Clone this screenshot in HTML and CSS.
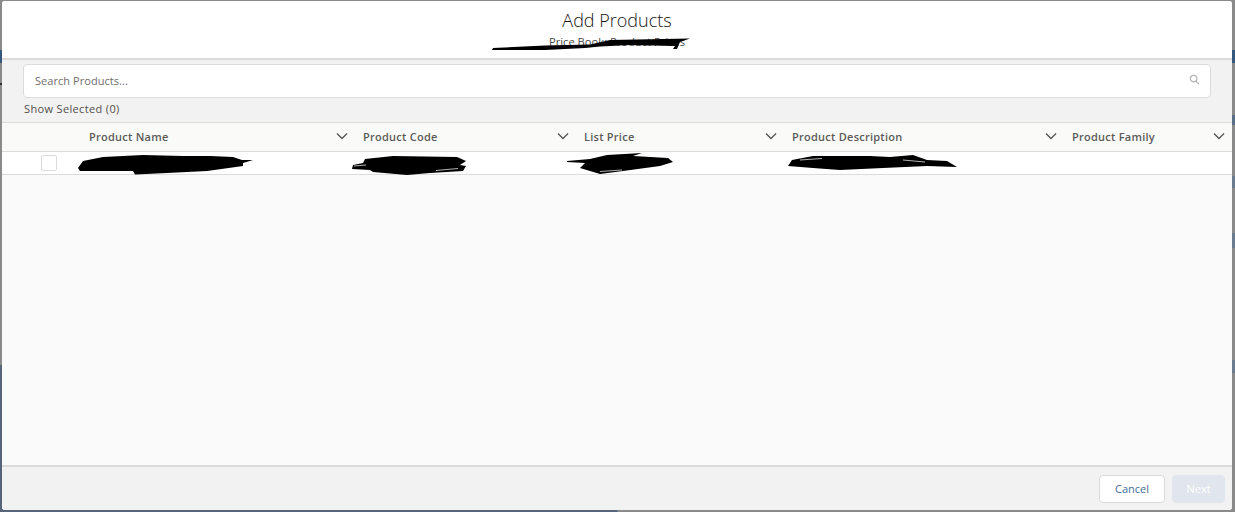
FILE: index.html
```html
<!DOCTYPE html>
<html lang="en">
<head>
<meta charset="utf-8">
<title>Add Products</title>
<link rel="stylesheet" href="styles.css">
</head>
<body>
<div class="modal">
  <header class="modal-header">
    <h1 class="title">Add Products</h1>
    <p class="subtitle">Price Book: Product Prices</p>
  </header>
  <section class="toolbar">
    <div class="search">
      <span class="search-text">Search Products...</span>
      <svg class="search-icon" viewBox="0 0 12 12" aria-hidden="true"><circle cx="5" cy="5" r="3.6"/><path d="M7.7 7.7 11 11"/></svg>
    </div>
    <div class="show-selected">Show Selected (0)</div>
  </section>
  <section class="table">
    <div class="table-row table-head">
      <div class="cell-check"></div>
      <div class="head-cell"><span>Product Name</span><svg class="chevron" viewBox="0 0 12 8" aria-hidden="true"><path d="M1 1.5 6 6.5 11 1.5"/></svg></div>
      <div class="head-cell"><span>Product Code</span><svg class="chevron" viewBox="0 0 12 8" aria-hidden="true"><path d="M1 1.5 6 6.5 11 1.5"/></svg></div>
      <div class="head-cell"><span>List Price</span><svg class="chevron" viewBox="0 0 12 8" aria-hidden="true"><path d="M1 1.5 6 6.5 11 1.5"/></svg></div>
      <div class="head-cell"><span>Product Description</span><svg class="chevron" viewBox="0 0 12 8" aria-hidden="true"><path d="M1 1.5 6 6.5 11 1.5"/></svg></div>
      <div class="head-cell"><span>Product Family</span><svg class="chevron" viewBox="0 0 12 8" aria-hidden="true"><path d="M1 1.5 6 6.5 11 1.5"/></svg></div>
    </div>
    <div class="table-row table-data">
      <div class="cell-check"><span class="checkbox"></span></div>
      <div></div><div></div><div></div><div></div><div></div>
    </div>
  </section>
  <footer class="modal-footer">
    <button class="btn btn-cancel" type="button">Cancel</button>
    <button class="btn btn-next" type="button">Next</button>
  </footer>
</div>
<svg class="redactions" viewBox="0 0 1235 512" aria-hidden="true">
  <path d="M492 50 493 48 545 45.500 590 44.500 610 40 690 38.500 680 42 677 49 673 49 675 46 630 45 600 46.500 585 48 545 50Z"/>
  <path d="M78 168 83 161 103 157 143 155 183 156 210 156 233 157 242 160 253 160 243 163 243 166 207 171 167 173 135 174.500 133 171 103 171 80 171Z"/>
  <path d="M352 169 353 165 363 163 365 159 393 156 457 157 466 161 460 165 466 166 463 171 430 173 407 175 373 172 370 170Z"/>
  <path d="M567 161 590 159 607 155 642 153 633 156 668 158 673 162 660 166 623 171 600 174 580 168 585 163 567 162Z"/>
  <path d="M788 166 792 160 813 156 870 156 890 157 913 155 927 160 947 161 957 167 927 166 883 168 840 170 813 168Z"/>
  <path class="streak" d="M436 170.500 458 168.500M354 166 366 165M800 160 822 158.500M903 160 925 162M600 171.500 622 170"/>
</svg>
</body>
</html>
```
FILE: styles.css
```css
* { box-sizing: border-box; }
html, body { height: 100%; }
body {
  margin: 0;
  height: 512px;
  overflow: hidden;
  position: relative;
  padding: 1px 3px 2px 2px;
  font-family: "Open Sans", "Noto Sans", sans-serif;
  color: #3e3e3c;
  background-color: #8a8a8a;
  background-image:
    linear-gradient(#8a8a8a 0 50px, #35587f 50px 63px, #8a8a8a 63px 83px, #2f2f2f 83px 85px, #8a8a8a 85px 365px, #56657a 365px 512px),
    linear-gradient(#8a8a8a 0 50px, #35587f 50px 63px, #8a8a8a 63px 115px, #5a6f88 115px 125px, #8a8a8a 125px 176px, #6c7c90 176px 188px, #8a8a8a 188px 233px, #6c7c90 233px 248px, #8a8a8a 248px 360px, #6c7c90 360px 373px, #8a8a8a 373px 512px);
  background-size: 50% 100%, 50% 100%;
  background-position: left top, right top;
  background-repeat: no-repeat;
}
.modal {
  height: 509px;
  display: flex;
  flex-direction: column;
  background: #fafafa;
  border-radius: 3px;
  overflow: hidden;
}
.modal-header {
  height: 59px;
  flex: none;
  background: #fff;
  border-bottom: 2px solid #dddbda;
  text-align: center;
  padding-top: 8px;
}
.title {
  margin: 0;
  font-size: 18px;
  line-height: 22px;
  font-weight: 300;
  color: #16130f;
}
.subtitle {
  margin: 4px 0 0;
  font-size: 11.200px;
  line-height: 14px;
  color: #4a4a4a;
}
.toolbar {
  height: 63px;
  flex: none;
  background: #f3f2f2;
  border-bottom: 1px solid #dddbda;
  padding: 4px 21px 0 21px;
}
.search {
  height: 34px;
  display: flex;
  align-items: center;
  justify-content: space-between;
  background: #fff;
  border: 1px solid #dddbda;
  border-radius: 4px;
  padding: 0 10px 0 11px;
}
.search-text {
  margin-top: -2px;
  font-size: 11px;
  color: #706e6b;
  letter-spacing: 0.05px;
}
.search-icon {
  width: 11px;
  height: 11px;
  margin-top: -3px;
  fill: none;
  stroke: #b0adab;
  stroke-width: 1.200;
}
.show-selected {
  margin: 4px 0 0 1px;
  font-size: 11px;
  line-height: 14px;
  color: #514f4d;
  letter-spacing: 0.35px;
}
.table-row {
  display: grid;
  grid-template-columns: 79px 274px 221px 208px 280px 1fr;
}
.table-head {
  height: 29px;
  background: #fafaf9;
  border-bottom: 1px solid #dddbda;
}
.head-cell {
  display: flex;
  align-items: center;
  justify-content: space-between;
  padding: 0 7px 2px 8px;
  font-size: 11px;
  font-weight: 600;
  letter-spacing: 0.25px;
  color: #5c5a58;
}
.chevron {
  width: 12px;
  height: 8px;
  fill: none;
  stroke: #55534f;
  stroke-width: 1.300;
}
.table-data {
  height: 23px;
  background: #fff;
  border-bottom: 1px solid #dddbda;
}
.cell-check {
  display: flex;
  align-items: center;
  padding-left: 39px;
}
.checkbox {
  width: 16px;
  height: 16px;
  background: #fff;
  border: 1px solid #dddbda;
  border-radius: 2px;
}
.table { flex: 1; }
.modal-footer {
  height: 45px;
  flex: none;
  display: flex;
  align-items: center;
  justify-content: flex-end;
  gap: 7px;
  padding: 0 7px 0 0;
  background: #f3f2f2;
  border-top: 2px solid #dddbda;
}
.btn {
  height: 28px;
  padding: 0;
  border-radius: 4px;
  font-family: inherit;
  font-size: 11px;
}
.btn-cancel {
  width: 66px;
  background: #fff;
  border: 1px solid #dddbda;
  color: #3f6c9b;
}
.btn-next {
  width: 53px;
  background: #e0e5ee;
  border: 1px solid #e0e5ee;
  color: #fff;
}
.redactions {
  position: absolute;
  left: 0;
  top: 0;
  width: 1235px;
  height: 512px;
  fill: #000;
  pointer-events: none;
}
.streak {
  fill: none;
  stroke: #fff;
  stroke-width: 0.700;
}
```
